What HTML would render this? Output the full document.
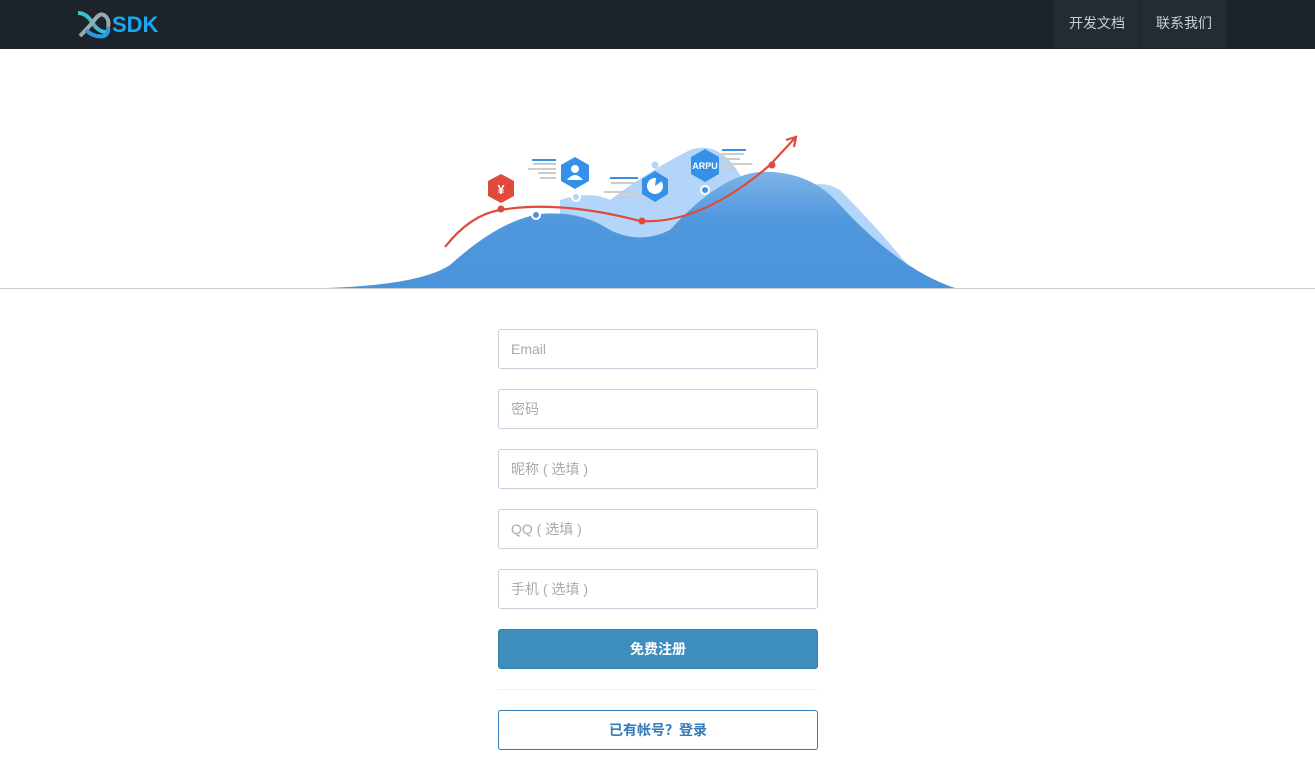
<!DOCTYPE html>
<html><head><meta charset="utf-8"><style>
*{margin:0;padding:0;box-sizing:border-box}
body{width:1315px;height:762px;background:#fff;font-family:"Liberation Sans","Noto Sans CJK SC",sans-serif;position:relative;overflow:hidden}
.nav{position:absolute;left:0;top:0;width:1315px;height:49px;background:#1c232a}
.nav a{position:absolute;top:0;height:48px;line-height:46px;color:#c9d0d4;font-size:14px;text-align:center;background:#232c32}
.hr{position:absolute;left:0;top:288px;width:1315px;height:1px;background:#ccc}
.inp{position:absolute;left:498px;width:320px;height:40px;border:1px solid #ccd;border-radius:3px;padding-left:12px;line-height:38px;font-size:14px;color:#aaa}
.btn{position:absolute;left:498px;width:320px;height:40px;border-radius:3px;text-align:center;line-height:38px;font-size:14px;font-weight:bold}
</style></head><body>
<div class="nav">
<svg style="position:absolute;left:76px;top:10px" width="36" height="30" viewBox="0 0 36 30">
<path d="M2 3 Q10 3 16 12 Q22 22 30 22" stroke="#3bbfcf" stroke-width="4" fill="none"/>
<path d="M4 26 Q14 16 20 8 Q24 3 28 5 Q34 9 32 17" stroke="#9aa" stroke-width="4" fill="none"/>
<path d="M10 20 Q18 28 28 26 Q33 24 32 17" stroke="#2a9be8" stroke-width="4" fill="none"/>
</svg>
<div style="position:absolute;left:112px;top:12px;font-size:22px;font-weight:bold;color:#1ca8f0">SDK</div>
<a style="left:1054px;width:86px">开发文档</a>
<a style="left:1141px;width:86px">联系我们</a>
</div>
<svg style="position:absolute;left:0;top:0" width="1315" height="290">
<defs><linearGradient id="g" x1="0" y1="0" x2="0" y2="1"><stop offset="0" stop-color="#7fb3e8"/><stop offset="0.4" stop-color="#5198dd"/><stop offset="1" stop-color="#4a94db"/></linearGradient></defs>
<path d="M560 200 Q590 190 610 200 Q650 170 690 150 Q720 140 740 175 Q780 200 800 190 Q820 178 840 190 Q880 230 920 280 L940 288 L560 288Z" fill="#b3d5fa"/>
<path d="M325 288 Q420 285 450 265 Q500 220 540 214 Q580 210 610 230 Q640 245 670 230 Q720 175 760 172 Q810 170 840 205 Q900 270 955 288Z" fill="url(#g)"/>
<path d="M445 247 Q470 215 500 210 Q560 200 640 221 Q700 225 770 165 L795 138" stroke="#df4a3c" stroke-width="2.2" fill="none"/>
<path d="M786 140 L796 137 L794 147" stroke="#df4a3c" stroke-width="2.2" fill="none"/>
<circle cx="501" cy="209" r="3.5" fill="#df4a3c"/><circle cx="642" cy="221" r="3.5" fill="#df4a3c"/><circle cx="772" cy="165" r="3.5" fill="#df4a3c"/>
<circle cx="536" cy="215" r="5" fill="#fff"/><circle cx="536" cy="215" r="3" fill="#4a90d9"/>
<circle cx="576" cy="197" r="5" fill="#fff"/><circle cx="576" cy="197" r="3" fill="#b3d5fa"/>
<circle cx="705" cy="190" r="5" fill="#fff"/><circle cx="705" cy="190" r="3" fill="#4a90d9"/>
<circle cx="655" cy="165" r="3.5" fill="#b3d5fa"/>
<polygon points="501,174 514,181 514,196 501,203 488,196 488,181" fill="#df4a3c"/>
<text x="501" y="194" font-size="13" font-weight="bold" fill="#fff" text-anchor="middle" font-family="Liberation Sans">¥</text>
<polygon points="575,157 589,165 589,181 575,189 561,181 561,165" fill="#3590e8"/>
<circle cx="575" cy="169" r="4" fill="#fff"/><path d="M567 180 Q575 170 583 180Z" fill="#fff"/>
<polygon points="655,171 668,179 668,194 655,202 642,194 642,179" fill="#3590e8"/>
<circle cx="655" cy="186" r="8" fill="#fff"/><path d="M655 186 L656 178 A8 8 0 0 1 662 181Z" fill="#3590e8"/>
<polygon points="705,149 719,157 719,174 705,182 691,174 691,157" fill="#3590e8"/>
<text x="705" y="169" font-size="9" font-weight="bold" fill="#fff" text-anchor="middle" font-family="Liberation Sans">ARPU</text>
<g fill="#ccc"><rect x="533" y="163" width="23" height="2"/><rect x="528" y="168" width="28" height="2"/><rect x="538" y="172" width="18" height="2"/><rect x="540" y="177" width="16" height="2"/>
<rect x="611" y="182" width="27" height="2"/><rect x="604" y="191" width="34" height="2"/><rect x="615" y="196" width="23" height="2"/>
<rect x="722" y="153" width="22" height="2"/><rect x="722" y="158" width="18" height="2"/><rect x="722" y="163" width="30" height="2"/><rect x="722" y="168" width="14" height="2"/></g>
<g fill="#3b8fe0"><rect x="532" y="159" width="24" height="2"/><rect x="610" y="177" width="28" height="2"/><rect x="722" y="149" width="24" height="2"/></g>
</svg>
<div class="hr"></div>
<div class="inp" style="top:329px">Email</div>
<div class="inp" style="top:389px">密码</div>
<div class="inp" style="top:449px">昵称 ( 选填 )</div>
<div class="inp" style="top:509px">QQ ( 选填 )</div>
<div class="inp" style="top:569px">手机 ( 选填 )</div>
<div class="btn" style="top:629px;background:#3d8ebd;border:1px solid #357fa9;color:#fff">免费注册</div>
<div style="position:absolute;left:498px;top:689px;width:320px;height:1px;background:#eee"></div>
<div class="btn" style="top:710px;border:1px solid #337ab7;color:#337ab7;background:#fff">已有帐号？登录</div>
</body></html>
